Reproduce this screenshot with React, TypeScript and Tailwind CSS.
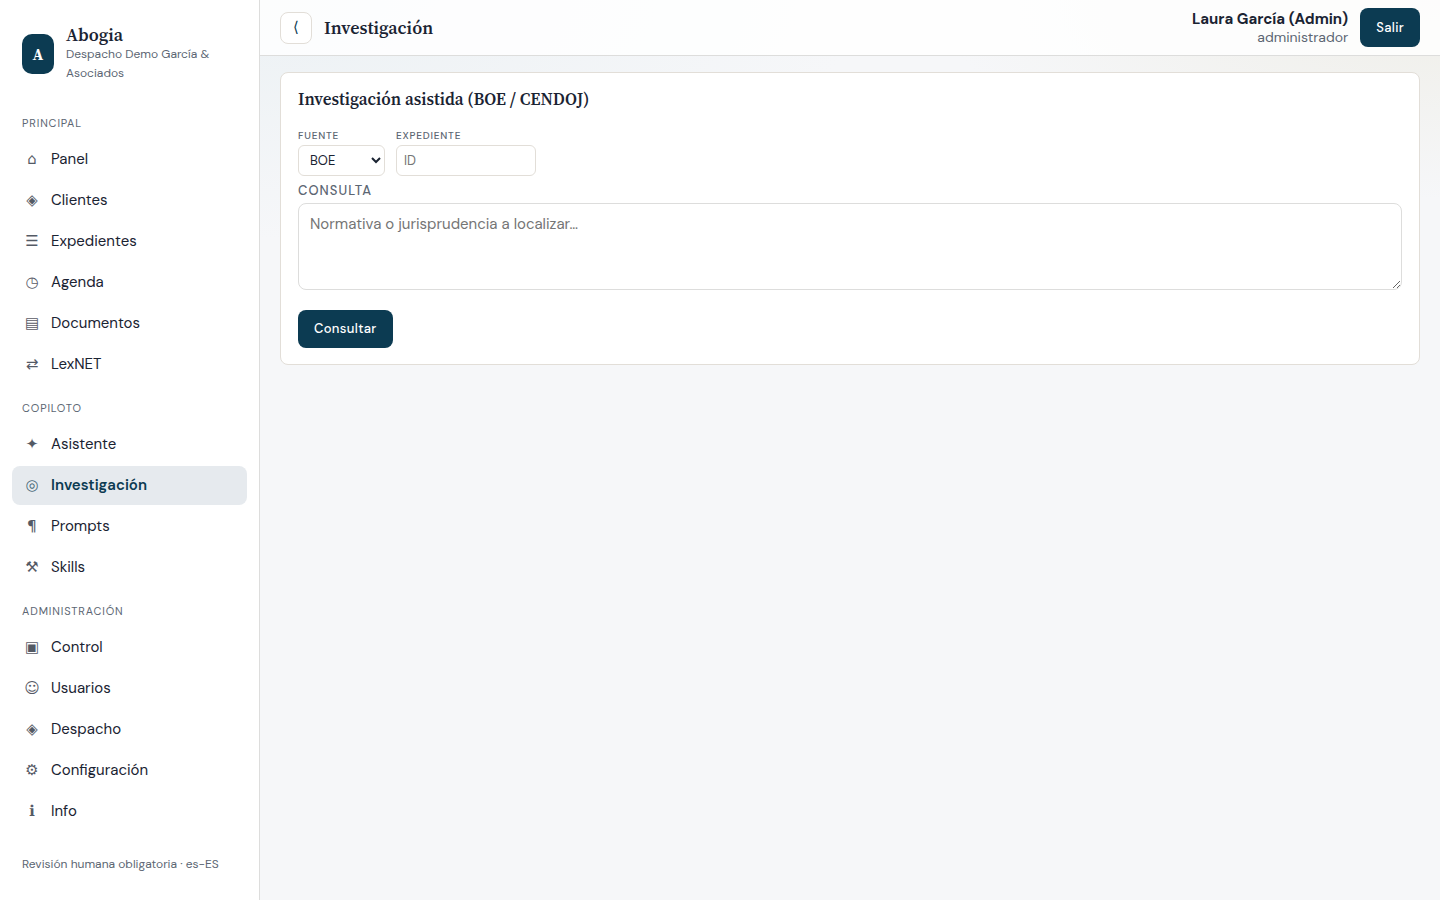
import React from 'react';

type NavItem = { icon: string; label: string; active?: boolean };
type NavGroup = { title: string; items: NavItem[] };

const groups: NavGroup[] = [
  {
    title: 'Principal',
    items: [
      { icon: '⌂', label: 'Panel' },
      { icon: '◈', label: 'Clientes' },
      { icon: '☰', label: 'Expedientes' },
      { icon: '◷', label: 'Agenda' },
      { icon: '▤', label: 'Documentos' },
      { icon: '⇄', label: 'LexNET' },
    ],
  },
  {
    title: 'Copiloto',
    items: [
      { icon: '✦', label: 'Asistente' },
      { icon: '◎', label: 'Investigación', active: true },
      { icon: '¶', label: 'Prompts' },
      { icon: '⚒', label: 'Skills' },
    ],
  },
  {
    title: 'Administración',
    items: [
      { icon: '▣', label: 'Control' },
      { icon: '☺', label: 'Usuarios' },
      { icon: '◈', label: 'Despacho' },
      { icon: '⚙', label: 'Configuración' },
      { icon: 'ℹ', label: 'Info' },
    ],
  },
];

function NavLink({ item }: { item: NavItem }): React.ReactElement {
  return (
    <a
      href="#"
      aria-current={item.active ? 'page' : undefined}
      className={
        item.active
          ? 'flex h-[39px] items-center gap-[9px] rounded-lg bg-[#e6eaee] px-[10px] font-semibold text-[#0c3b52]'
          : 'flex h-[39px] items-center gap-[9px] rounded-lg px-[10px] text-[#1a2332] hover:bg-[#f1f3f6]'
      }
    >
      <span
        aria-hidden="true"
        className="w-5 text-center font-['DM_Sans','DejaVu_Sans',sans-serif] font-normal opacity-75"
      >
        {item.icon}
      </span>
      {item.label}
    </a>
  );
}

function Sidebar(): React.ReactElement {
  return (
    <aside className="flex w-[260px] shrink-0 flex-col border-r border-[#dddddc] bg-white px-3 pt-[25px] pb-7">
      <div className="flex items-center gap-3 px-[10px]">
        <div className="flex h-10 w-8 shrink-0 items-center justify-center rounded-[10px] bg-[#0c3b52] font-['Source_Serif_4','Noto_Serif','Liberation_Serif',serif] text-base leading-none font-bold text-white">
          A
        </div>
        <div>
          <div className="font-['Source_Serif_4','Noto_Serif','Liberation_Serif',serif] text-lg leading-5 font-semibold">
            Abogia
          </div>
          <div className="text-xs leading-[19px] text-[#5c6673]">Despacho Demo García &amp; Asociados</div>
        </div>
      </div>
      <nav className="mt-4 flex-1">
        {groups.map((group) => (
          <section key={group.title}>
            <h2 className="px-[10px] pt-4 pb-[9px] text-[11px] leading-4 tracking-[0.08em] text-[#5c6673] uppercase">
              {group.title}
            </h2>
            <ul className="flex flex-col gap-[2px]">
              {group.items.map((item) => (
                <li key={item.label}>
                  <NavLink item={item} />
                </li>
              ))}
            </ul>
          </section>
        ))}
      </nav>
      <p className="px-[10px] text-xs leading-4 text-[#5c6673]">Revisión humana obligatoria · es-ES</p>
    </aside>
  );
}

function Topbar(): React.ReactElement {
  return (
    <header className="flex h-14 items-center gap-3 border-b border-[#dddddc] bg-white/85 px-5">
      <button
        type="button"
        aria-label="Contraer menú"
        className="flex size-8 items-center justify-center rounded-lg border border-[#e2ded8] bg-white font-['DM_Sans','DejaVu_Sans',sans-serif] text-[#0c3b52]"
      >
        ⟨
      </button>
      <h1 className="flex-1 font-['Source_Serif_4','Noto_Serif','Liberation_Serif',serif] text-lg font-semibold">
        Investigación
      </h1>
      <div className="text-right">
        <div className="leading-[18px] font-bold">Laura García (Admin)</div>
        <div className="text-sm leading-[18px] text-[#5c6673]">administrador</div>
      </div>
      <button
        type="button"
        className="h-[39px] rounded-lg bg-[#0c3b52] px-4 text-[13px] font-medium tracking-wide text-white"
      >
        Salir
      </button>
    </header>
  );
}

function ResearchForm(): React.ReactElement {
  return (
    <form
      onSubmit={(e) => e.preventDefault()}
      className="rounded-lg border border-[#e2ded8] bg-white px-[17px] py-4"
    >
      <h2 className="mb-5 font-['Source_Serif_4','Noto_Serif','Liberation_Serif',serif] text-[17px] leading-5 font-semibold">
        Investigación asistida (BOE / CENDOJ)
      </h2>
      <div className="flex gap-[11px]">
        <div className="flex flex-col">
          <label
            htmlFor="fuente"
            className="mb-[2px] text-[10px] leading-[14px] font-medium tracking-[0.08em] text-[#5c6673] uppercase"
          >
            Fuente
          </label>
          <select
            id="fuente"
            className="h-[31px] w-[87px] rounded-md border border-[#e2ded8] bg-white px-[7px] text-[13px]"
          >
            <option>BOE</option>
            <option>CENDOJ</option>
          </select>
        </div>
        <div className="flex flex-col">
          <label
            htmlFor="expediente"
            className="mb-[2px] text-[10px] leading-[14px] font-medium tracking-[0.08em] text-[#5c6673] uppercase"
          >
            Expediente
          </label>
          <input
            id="expediente"
            placeholder="ID"
            className="h-[31px] w-[140px] rounded-md border border-[#e2ded8] bg-white px-[7px] text-[13px] placeholder:text-[#757575]"
          />
        </div>
      </div>
      <label
        htmlFor="consulta"
        className="mt-1 mb-[2px] block text-[13px] leading-[21px] font-medium tracking-[0.08em] text-[#5c6673] uppercase"
      >
        Consulta
      </label>
      <textarea
        id="consulta"
        rows={3}
        placeholder="Normativa o jurisprudencia a localizar…"
        className="block h-[87px] w-full rounded-lg border border-[#dddddc] bg-white px-[11px] py-[9px] leading-[22px] placeholder:text-[#757575]"
      />
      <button
        type="submit"
        className="mt-5 block h-[38px] rounded-lg bg-[#0c3b52] px-4 text-[13px] font-medium tracking-wide text-white"
      >
        Consultar
      </button>
    </form>
  );
}

export default function App(): React.ReactElement {
  return (
    <div className="flex min-h-screen bg-[#f6f7f9] font-['DM_Sans','Open_Sans',sans-serif] text-[15px] text-[#1a2332]">
      <Sidebar />
      <div className="flex min-w-0 flex-1 flex-col bg-[radial-gradient(ellipse_600px_240px_at_0%_0%,#ecf1f4,transparent),radial-gradient(ellipse_500px_200px_at_100%_0%,#efeee8,transparent)]">
        <Topbar />
        <main className="flex-1 px-5 py-4">
          <ResearchForm />
        </main>
      </div>
    </div>
  );
}
